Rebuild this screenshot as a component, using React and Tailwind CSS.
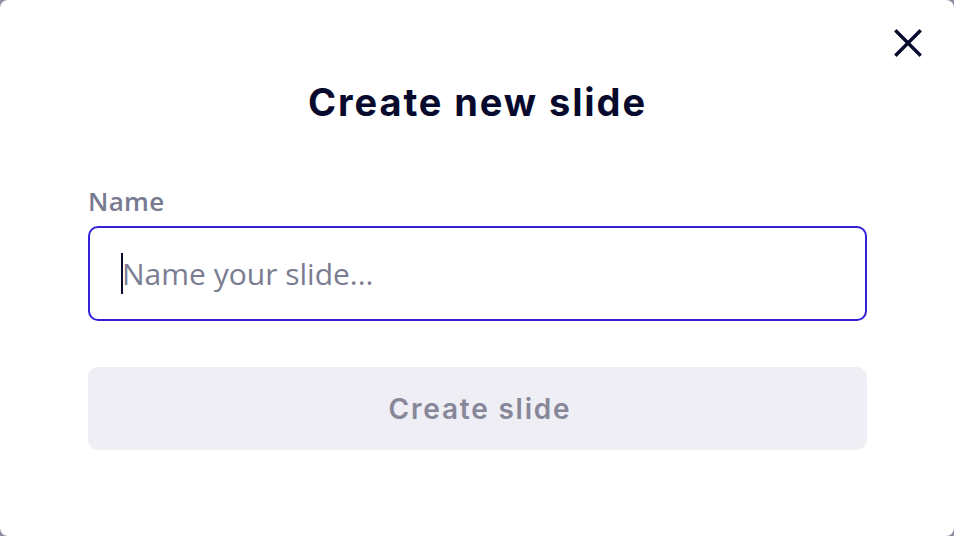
import React from 'react';

const App = () => {
    return (
        <div className="w-[954px] h-[536px] bg-[#8a8fa3] overflow-hidden">
            <div className="relative w-full h-full bg-white rounded-[8px] pl-[88px] pr-[87px] pt-[78px]" style={{ fontFamily: '"Open Sans", sans-serif' }}>
                {/* Close button */}
                <button className="absolute right-[31px] top-[28px] w-[30px] h-[30px] flex items-center justify-center text-[#070a2c]">
                    <svg width="28" height="28" viewBox="0 0 28 28" fill="none" stroke="currentColor" strokeWidth="3.4" strokeLinecap="square">
                        <path d="M2.5 2.5 L25.5 25.5 M25.5 2.5 L2.5 25.5" />
                    </svg>
                </button>

                <h1 className="text-center text-[38px] leading-[48px] font-bold text-[#070a2c] tracking-[1.9px]" style={{ fontFamily: 'Inter, sans-serif' }}>
                    Create new slide
                </h1>

                <form onSubmit={(e) => e.preventDefault()} className="mt-[59px]">
                    <label className="block text-[26px] leading-[32px] font-semibold text-[#787b8f] tracking-[0.3px]">Name</label>
                    <div className="mt-[9px] h-[95px] rounded-[10px] border-2 border-[#3420d8] flex items-center pl-[31px]">
                        <span className="w-[2px] h-[41px] bg-[#070a2c]" />
                        <span className="text-[30px] text-[#7a7d91] -ml-[1px]">Name your slide...</span>
                    </div>

                    <button type="button" disabled className="mt-[46px] w-full h-[83px] rounded-[10px] bg-[#eeeef4] text-[28px] font-semibold text-[#878799] tracking-[1.8px] pl-[5px]" style={{ fontFamily: 'Inter, sans-serif' }}>
                        Create slide
                    </button>
                </form>
            </div>
        </div>
    );
};

export default App;
